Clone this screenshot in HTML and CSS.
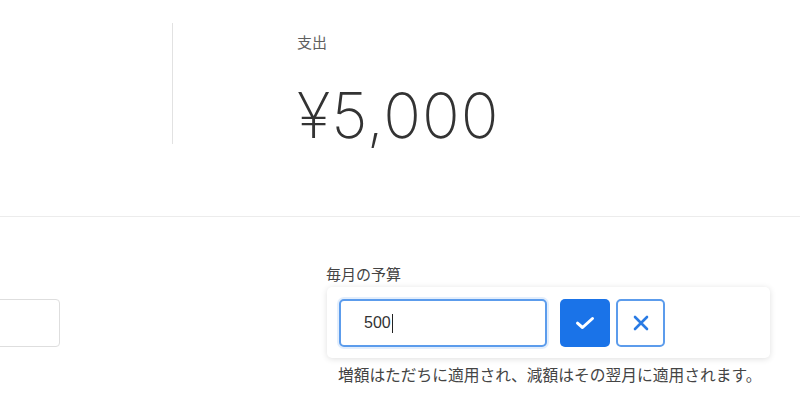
FILE: index.html
```html
<!DOCTYPE html>
<html lang="ja">
<head>
    <meta charset="UTF-8">
    <meta name="viewport" content="width=device-width, initial-scale=1.0">
    <title>予算</title>
    <link rel="stylesheet" href="styles.css">
</head>
<body>
    <div class="page">
        <section class="summary">
            <div class="summary-col summary-col-left"></div>
            <div class="summary-col summary-col-right">
                <p class="summary-label">支出</p>
                <p class="summary-amount">¥5,000</p>
            </div>
        </section>

        <section class="settings">
            <div class="field field-left">
                <div class="text-input"></div>
            </div>
            <div class="field field-right">
                <p class="field-label">毎月の予算</p>
                <div class="editor">
                    <div class="text-input text-input-focus">500<span class="caret"></span></div>
                    <button class="btn btn-save" aria-label="保存">
                        <svg width="20" height="14" viewBox="0 0 20 14"><path d="M2.5 7.2 L7.5 11.5 L17.5 2.5" fill="none" stroke="#fff" stroke-width="3" stroke-linecap="round" stroke-linejoin="round"/></svg>
                    </button>
                    <button class="btn btn-cancel" aria-label="キャンセル">
                        <svg width="16" height="16" viewBox="0 0 16 16"><path d="M2 2 L14 14 M14 2 L2 14" fill="none" stroke="#2a7be4" stroke-width="2.6" stroke-linecap="round"/></svg>
                    </button>
                </div>
                <p class="field-help">増額はただちに適用され、減額はその翌月に適用されます。</p>
            </div>
        </section>
    </div>
</body>
</html>
```

FILE: styles.css
```css
:root {
    --text-main: #333333;
    --text-sub: #5f5f5f;
    --line: #ececec;
    --blue: #1a73e8;
    --blue-border: #5c9cec;
}

body {
    margin: 0;
    background: #ffffff;
    color: var(--text-main);
    font-family: "Noto Sans CJK JP", "Liberation Sans", sans-serif;
    overflow: hidden;
}

p {
    margin: 0;
}

/* the page is scrolled sideways, so the first column starts off screen */
.page {
    margin-left: -240px;
}

.summary {
    display: flex;
    height: 216px;
    border-bottom: 1px solid var(--line);
}

.summary-col-left {
    width: 412px;
    height: 121px;
    margin-top: 23px;
    border-right: 1px solid #e2e2e2;
}

.summary-col-right {
    padding: 31px 0 0 124px;
}

.summary-label {
    font-size: 15px;
    line-height: 22px;
    color: var(--text-sub);
}

.summary-amount {
    margin-top: 31px;
    font-family: "Inter", "Liberation Sans", sans-serif;
    font-weight: 200;
    font-size: 62.5px;
    line-height: 1;
    letter-spacing: 1px;
    color: var(--text-main);
}

.settings {
    display: flex;
    padding-top: 46px;
}

.field-left {
    width: 260px;
    margin-left: 40px;
    padding-top: 36px;
}

.field-right {
    margin-left: 267px;
}

.field-label {
    font-size: 15px;
    line-height: 22px;
    color: #444;
    margin-left: -1px;
}

.text-input {
    box-sizing: border-box;
    height: 48px;
    border: 1px solid #dedede;
    border-radius: 4px;
    background: #fff;
}

.editor {
    display: flex;
    align-items: center;
    width: 443px;
    box-sizing: border-box;
    margin-top: 2px;
    padding: 12px 12px 11px;
    background: #fff;
    border-radius: 5px;
    box-shadow: 0 1px 6px rgba(0, 0, 0, 0.13);
}

.text-input-focus {
    display: flex;
    align-items: center;
    width: 208px;
    padding-left: 23px;
    border: 2px solid var(--blue-border);
    border-radius: 5px;
    box-shadow: 0 0 0 2px rgba(26, 115, 232, 0.12);
    font-family: "Liberation Sans", sans-serif;
    font-size: 16px;
    color: var(--text-main);
}

.caret {
    display: inline-block;
    width: 1px;
    height: 19px;
    margin-left: 1px;
    background: #222;
}

.btn {
    display: flex;
    align-items: center;
    justify-content: center;
    box-sizing: border-box;
    height: 48px;
    padding: 0;
    border-radius: 5px;
    cursor: pointer;
}

.btn-save {
    width: 50px;
    margin-left: 13px;
    border: none;
    background: var(--blue);
}

.btn-cancel {
    width: 49px;
    margin-left: 6px;
    border: 2px solid var(--blue-border);
    background: #fff;
}

.field-help {
    margin-top: 6px;
    padding-left: 11px;
    font-size: 15.75px;
    line-height: 22px;
    color: #444;
}
```
